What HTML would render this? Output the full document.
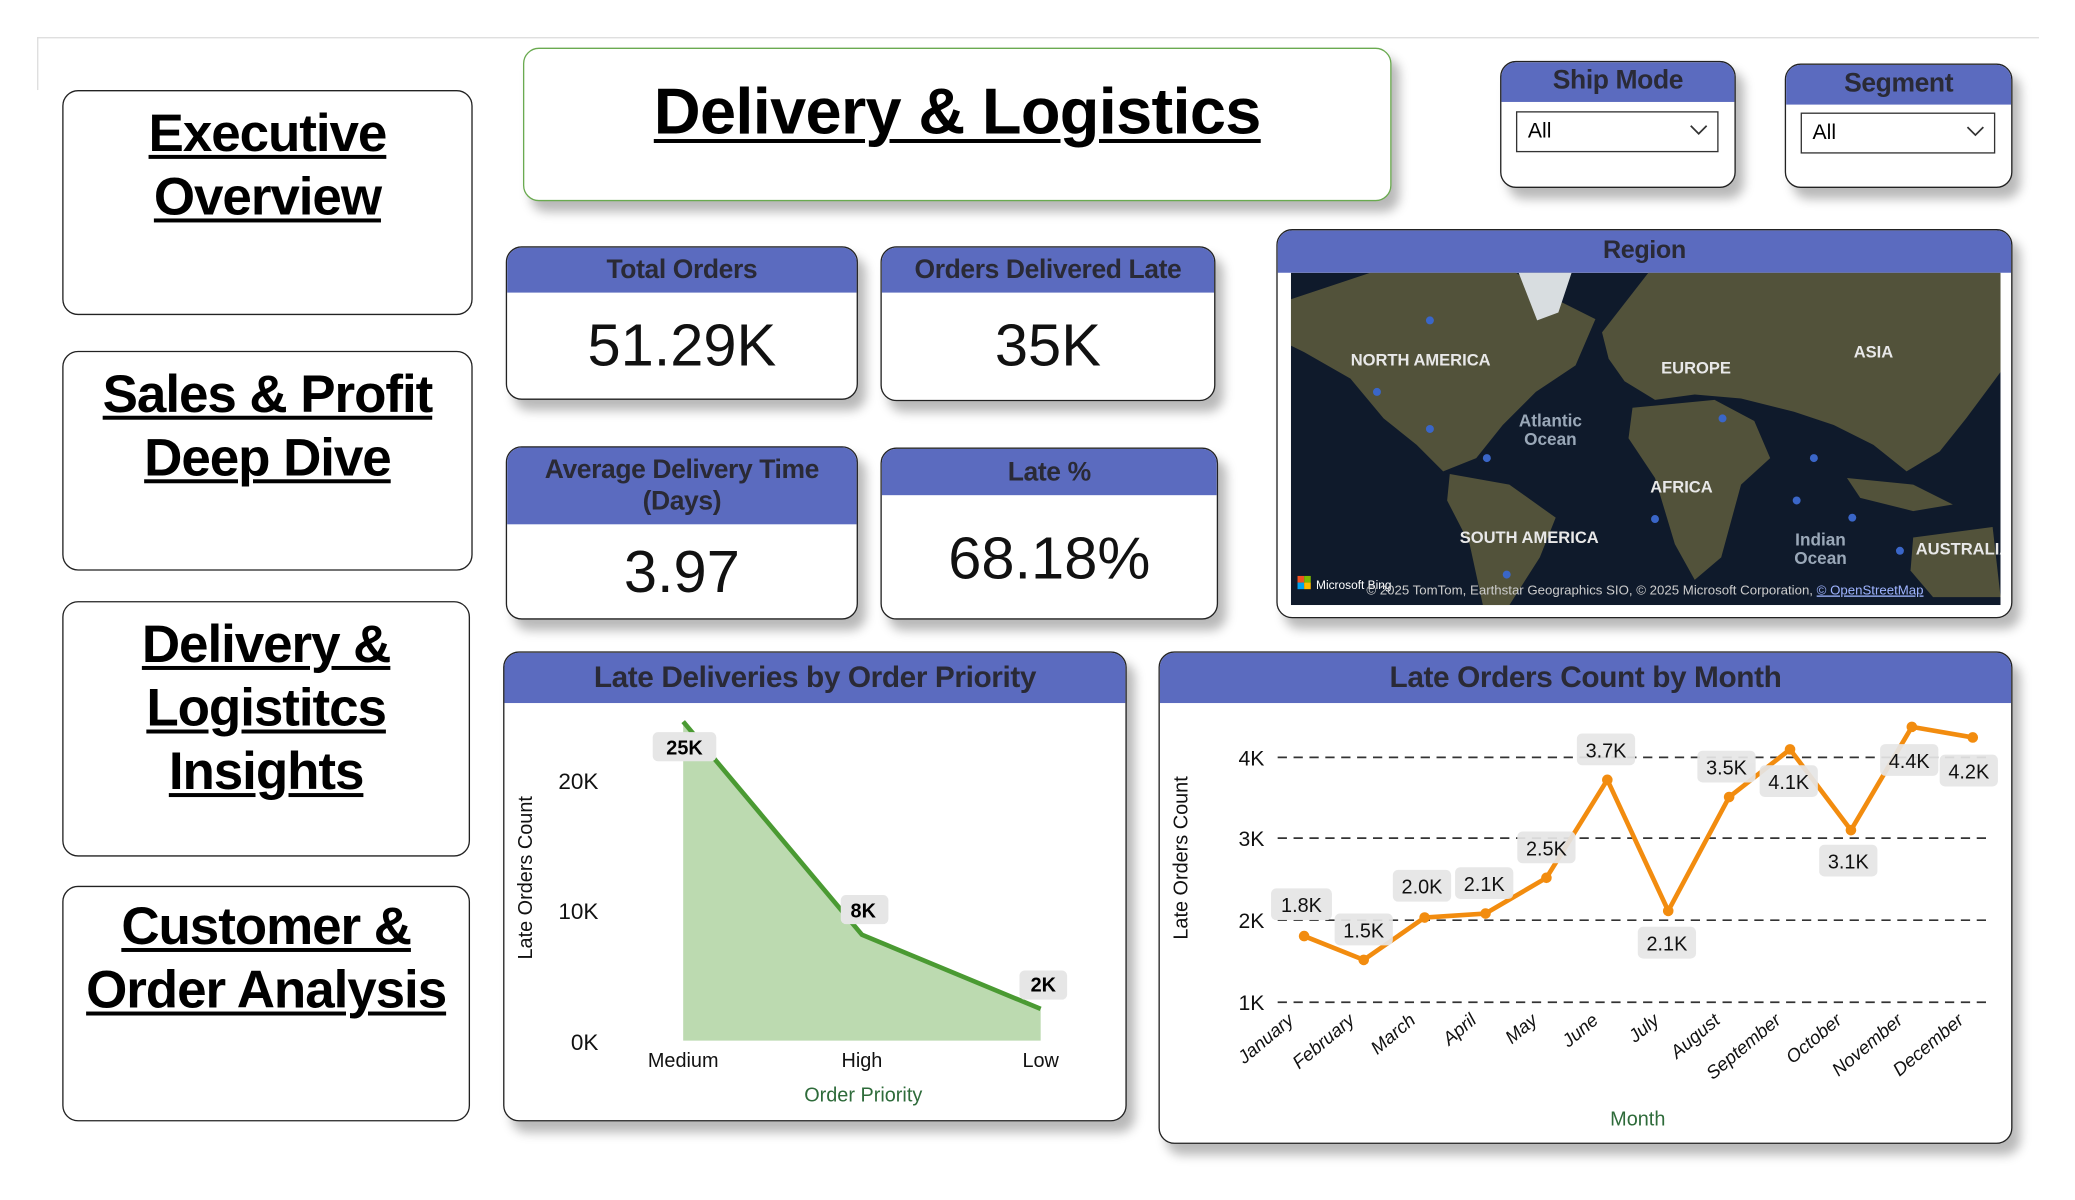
<!DOCTYPE html>
<html><head><meta charset="utf-8"><style>
html,body{margin:0;padding:0;background:#fff;overflow:hidden}
body{width:2075px;height:1200px;position:relative}
#w{position:absolute;left:0;top:0;width:1568px;height:906px;transform:scale(1.3240);transform-origin:0 0;font-family:"Liberation Sans",sans-serif}
.b{position:absolute;box-sizing:border-box;background:#fff;border:1.5px solid #222;border-radius:12px;overflow:hidden}
.sh{box-shadow:6px 8px 8px rgba(0,0,0,.28)}
.nav{display:flex;justify-content:center;text-align:center;font-weight:bold;font-size:40px;letter-spacing:-0.8px;line-height:48px;text-decoration:underline;text-decoration-thickness:3px;text-underline-offset:3px;color:#000}
.hd{background:#5b6bbf;color:#2a2a36;font-weight:bold;text-align:center;font-size:20px;letter-spacing:-0.3px}
.val{text-align:center;color:#111;font-size:45px}
.dd{position:absolute;border:1.5px solid #333;box-sizing:border-box;font-family:"Liberation Sans",sans-serif;font-size:16px;padding:6px 8px}
</style></head><body><div id="w">
<div style="position:absolute;left:28px;top:28px;width:1512px;height:1px;background:#ddd"></div>
<div style="position:absolute;left:28px;top:28px;width:1px;height:40px;background:#ddd"></div>

<div class="b nav" style="left:47px;top:68px;width:310px;height:170px;padding-top:8px">Executive<br>Overview</div>
<div class="b nav" style="left:47px;top:265px;width:310px;height:166px;padding-top:8px">Sales &amp; Profit<br>Deep Dive</div>
<div class="b nav" style="left:47px;top:454px;width:308px;height:193px;padding-top:8px">Delivery &amp;<br>Logistitcs<br>Insights</div>
<div class="b nav" style="left:47px;top:669px;width:308px;height:178px;padding-top:6px">Customer &amp;<br>Order Analysis</div>

<div class="b sh" style="left:395px;top:36px;width:656px;height:116px;border-color:#6aaa50;text-align:center;font-weight:bold;font-size:49px;letter-spacing:-0.5px;padding-top:20px"><span style="text-decoration:underline;text-decoration-thickness:3px;text-underline-offset:4px">Delivery &amp; Logistics</span></div>

<div class="b sh" style="left:1133px;top:46px;width:178px;height:96px"><div class="hd" style="height:30px;line-height:28px">Ship Mode</div>
<div class="dd" style="left:11px;top:37px;width:153px;height:31px">All<svg style="position:absolute;right:7px;top:9px" width="14" height="9"><polyline points="1,1 7,7 13,1" fill="none" stroke="#333" stroke-width="1.3"/></svg></div></div>
<div class="b sh" style="left:1348px;top:48px;width:172px;height:94px"><div class="hd" style="height:30px;line-height:28px">Segment</div>
<div class="dd" style="left:11px;top:36px;width:147px;height:31px">All<svg style="position:absolute;right:7px;top:9px" width="14" height="9"><polyline points="1,1 7,7 13,1" fill="none" stroke="#333" stroke-width="1.3"/></svg></div></div>

<div class="b sh" style="left:382px;top:186px;width:266px;height:116px"><div class="hd" style="height:34px;line-height:34px">Total Orders</div><div class="val" style="line-height:80px">51.29K</div></div>
<div class="b sh" style="left:665px;top:186px;width:253px;height:117px"><div class="hd" style="height:34px;line-height:34px">Orders Delivered Late</div><div class="val" style="line-height:80px">35K</div></div>
<div class="b sh" style="left:382px;top:337px;width:266px;height:131px"><div class="hd" style="height:58px;line-height:24px;padding-top:5px;box-sizing:border-box">Average Delivery Time<br>(Days)</div><div class="val" style="line-height:72px">3.97</div></div>
<div class="b sh" style="left:665px;top:338px;width:255px;height:130px"><div class="hd" style="height:35px;line-height:36px">Late %</div><div class="val" style="line-height:96px">68.18%</div></div>

<div class="b sh" style="left:964px;top:173px;width:556px;height:294px"><div class="hd" style="height:32px;line-height:32px;font-size:19px">Region</div>
<svg style="position:absolute;left:10px;top:32px" width="536" height="251" viewBox="0 0 536 251">
<rect width="536" height="251" fill="#0f1a2b"/>
<g fill="#52523a">
<polygon points="0,20 60,0 170,0 200,20 230,35 215,70 185,90 160,115 140,140 115,150 95,130 70,110 45,80 10,60 0,55"/>
<polygon points="120,152 165,160 200,185 188,215 165,251 145,251 135,205 118,172"/>
<polygon points="235,45 270,0 536,0 536,75 510,110 490,135 465,150 440,130 410,115 380,105 340,95 305,92 275,96 252,82 240,65"/>
<polygon points="258,102 320,96 350,112 362,140 340,160 325,215 305,232 290,205 275,155 255,125"/>
<polygon points="470,200 530,192 536,245 485,245 468,225"/>
<polygon points="420,155 470,160 500,175 470,180 430,170"/>
</g>
<polygon points="172,0 212,0 202,30 186,36" fill="#d8dde0"/>
<g fill="#3a66c8"><circle cx="105" cy="36" r="3"/><circle cx="65" cy="90" r="3"/><circle cx="105" cy="118" r="3"/><circle cx="148" cy="140" r="3"/><circle cx="326" cy="110" r="3"/><circle cx="395" cy="140" r="3"/><circle cx="382" cy="172" r="3"/><circle cx="424" cy="185" r="3"/><circle cx="275" cy="186" r="3"/><circle cx="163" cy="228" r="3"/><circle cx="460" cy="210" r="3"/></g>
<g fill="#e8e8e8" font-family="Liberation Sans" font-weight="bold" font-size="12.5" text-anchor="middle">
<text x="98" y="70">NORTH AMERICA</text><text x="306" y="76">EUROPE</text><text x="440" y="64">ASIA</text><text x="295" y="166">AFRICA</text><text x="180" y="204">SOUTH AMERICA</text><text x="508" y="213">AUSTRALIA</text></g>
<g fill="#9aa8b8" font-family="Liberation Sans" font-weight="bold" font-size="13" text-anchor="middle"><text x="196" y="116">Atlantic</text><text x="196" y="130">Ocean</text><text x="400" y="206">Indian</text><text x="400" y="220">Ocean</text></g>
<rect x="5" y="229" width="5" height="5" fill="#f25022"/><rect x="10" y="229" width="5" height="5" fill="#7fba00"/><rect x="5" y="234" width="5" height="5" fill="#00a4ef"/><rect x="10" y="234" width="5" height="5" fill="#ffb900"/>
<text x="19" y="239" fill="#fff" font-family="Liberation Sans" font-size="9">Microsoft Bing</text>
<text x="57" y="243" fill="#ccc" font-family="Liberation Sans" font-size="10">© 2025 TomTom, Earthstar Geographics SIO, © 2025 Microsoft Corporation, <tspan fill="#9fb4ff" text-decoration="underline">© OpenStreetMap</tspan></text>
</svg></div>

<div class="b sh" style="left:380px;top:492px;width:471px;height:355px"><div class="hd" style="height:38px;line-height:38px;font-size:22.5px">Late Deliveries by Order Priority</div></div>
<div class="b sh" style="left:875px;top:492px;width:645px;height:372px"><div class="hd" style="height:38px;line-height:38px;font-size:22.5px">Late Orders Count by Month</div></div>

<svg style="position:absolute;left:0;top:0" width="1568" height="906" font-family="Liberation Sans, sans-serif">
<polygon points="516,545 651,706 786,762 786,786 516,786" fill="#bcdab0"/>
<polyline points="516,545 651,706 786,762" fill="none" stroke="#4a9a32" stroke-width="3.5"/>
<g fill="#e6e6e6"><rect x="493" y="553" width="48" height="22" rx="4"/><rect x="635" y="676" width="36" height="22" rx="4"/><rect x="770" y="733" width="36" height="22" rx="4"/></g>
<g font-weight="bold" font-size="15" text-anchor="middle" fill="#000"><text x="517" y="570">25K</text><text x="652" y="693">8K</text><text x="788" y="749">2K</text></g>
<g font-size="17" fill="#111" text-anchor="end"><text x="452" y="596">20K</text><text x="452" y="694">10K</text><text x="452" y="793">0K</text></g>
<g font-size="15" fill="#111" text-anchor="middle"><text x="516" y="806">Medium</text><text x="651" y="806">High</text><text x="786" y="806">Low</text></g>
<text x="652" y="832" font-size="15" fill="#2e6b3a" text-anchor="middle">Order Priority</text>
<text transform="translate(402,663) rotate(-90)" font-size="15" fill="#111" text-anchor="middle">Late Orders Count</text>

<g stroke="#333" stroke-width="1.3" stroke-dasharray="7,5"><line x1="965" y1="572" x2="1505" y2="572"/><line x1="965" y1="633" x2="1505" y2="633"/><line x1="965" y1="695" x2="1505" y2="695"/><line x1="965" y1="757" x2="1505" y2="757"/></g>
<g font-size="16" fill="#111" text-anchor="end"><text x="955" y="578">4K</text><text x="955" y="639">3K</text><text x="955" y="701">2K</text><text x="955" y="763">1K</text></g>
<text transform="translate(897,648) rotate(-90)" font-size="15" fill="#111" text-anchor="middle">Late Orders Count</text>
<polyline points="985,707 1030,725 1076,693 1122,690 1168,663 1214,589 1260,688 1306,602 1352,566 1398,627 1444,549 1490,557" fill="none" stroke="#f28c0f" stroke-width="3.5" stroke-linejoin="round"/>
<g fill="#f28c0f"><circle cx="985" cy="707" r="4"/><circle cx="1030" cy="725" r="4"/><circle cx="1076" cy="693" r="4"/><circle cx="1122" cy="690" r="4"/><circle cx="1168" cy="663" r="4"/><circle cx="1214" cy="589" r="4"/><circle cx="1260" cy="688" r="4"/><circle cx="1306" cy="602" r="4"/><circle cx="1352" cy="566" r="4"/><circle cx="1398" cy="627" r="4"/><circle cx="1444" cy="549" r="4"/><circle cx="1490" cy="557" r="4"/></g>
<g fill="#e6e6e6" opacity=".92"><rect x="960" y="671" width="46" height="24" rx="4"/><rect x="1008" y="690" width="44" height="24" rx="4"/><rect x="1052" y="657" width="44" height="24" rx="4"/><rect x="1099" y="655" width="44" height="24" rx="4"/><rect x="1146" y="628" width="44" height="24" rx="4"/><rect x="1191" y="554" width="44" height="24" rx="4"/><rect x="1237" y="700" width="44" height="24" rx="4"/><rect x="1282" y="567" width="44" height="24" rx="4"/><rect x="1329" y="578" width="44" height="24" rx="4"/><rect x="1374" y="638" width="44" height="24" rx="4"/><rect x="1420" y="562" width="44" height="24" rx="4"/><rect x="1465" y="570" width="44" height="24" rx="4"/></g>
<g font-size="15" fill="#111" text-anchor="middle"><text x="983" y="689">1.8K</text><text x="1030" y="708">1.5K</text><text x="1074" y="675">2.0K</text><text x="1121" y="673">2.1K</text><text x="1168" y="646">2.5K</text><text x="1213" y="572">3.7K</text><text x="1259" y="718">2.1K</text><text x="1304" y="585">3.5K</text><text x="1351" y="596">4.1K</text><text x="1396" y="656">3.1K</text><text x="1442" y="580">4.4K</text><text x="1487" y="588">4.2K</text></g>
<g font-size="14" fill="#111" text-anchor="end" font-style="italic">
<text transform="translate(978,772) rotate(-40)">January</text><text transform="translate(1024,772) rotate(-40)">February</text><text transform="translate(1070,772) rotate(-40)">March</text><text transform="translate(1116,772) rotate(-40)">April</text><text transform="translate(1162,772) rotate(-40)">May</text><text transform="translate(1208,772) rotate(-40)">June</text><text transform="translate(1254,772) rotate(-40)">July</text><text transform="translate(1300,772) rotate(-40)">August</text><text transform="translate(1346,772) rotate(-40)">September</text><text transform="translate(1392,772) rotate(-40)">October</text><text transform="translate(1438,772) rotate(-40)">November</text><text transform="translate(1484,772) rotate(-40)">December</text></g>
<text x="1237" y="850" font-size="15" fill="#2e6b3a" text-anchor="middle">Month</text>
</svg>
</div></body></html>
